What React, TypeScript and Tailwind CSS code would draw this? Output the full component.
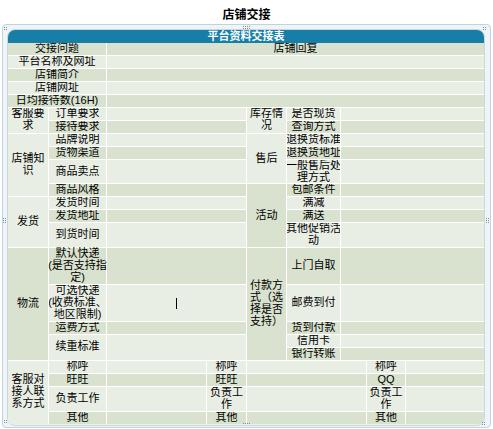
import React from "react";

const FONT = { fontFamily: '"Liberation Sans", "Noto Sans CJK SC", sans-serif' };

function C({
  g,
  children,
  className = "",
}: {
  g?: boolean;
  children?: React.ReactNode;
  className?: string;
}) {
  return (
    <div
      className={`flex items-center justify-center text-center overflow-hidden ${
        g ? "bg-[#d8e2ce]" : "bg-[#e9eee5]"
      } ${className}`}
    >
      {children}
    </div>
  );
}

function Dots({ cols, rows, className }: { cols: number; rows: number; className: string }) {
  const items = [];
  for (let r = 0; r < rows; r++) {
    for (let c = 0; c < cols; c++) {
      items.push(
        <span
          key={`${r}-${c}`}
          className="absolute w-px h-px bg-[#7f8f98]"
          style={{ left: c * 2, top: r * 2 }}
        />
      );
    }
  }
  return <div className={`absolute ${className}`}>{items}</div>;
}

export default function App() {
  return (
    <div className="w-[493px] h-[429px] bg-white text-black text-[11px]" style={FONT}>
      <div className="h-[24px] pt-[9px] text-center text-[12px] leading-[13px] font-bold">店铺交接</div>
      <div className="relative ml-[2px] w-[489px] h-[404px] border border-[#c3d3db] rounded-[4px] bg-[#eef4f7] pt-[4px] pl-[4px] pr-[5px]">
        <Dots cols={2} rows={2} className="left-[1px] top-[2px]" />
        <Dots cols={4} rows={2} className="left-[240px] top-[1px]" />
        <Dots cols={2} rows={2} className="left-[480px] top-[2px]" />
        <Dots cols={2} rows={3} className="left-[0px] top-[193px]" />
        <Dots cols={2} rows={3} className="left-[483px] top-[193px]" />
        <Dots cols={2} rows={2} className="left-[1px] top-[395px]" />
        <Dots cols={4} rows={1} className="left-[240px] top-[398px]" />
        <Dots cols={2} rows={2} className="left-[479px] top-[397px]" />

        <div className="w-[478px] border border-[#cad7dd] rounded-[8px] overflow-hidden bg-[#eef2ec] pb-[1px]">
          <div className="h-[13px] bg-[#177fa7] text-white font-bold text-center leading-[13px]">
            平台资料交接表
          </div>
          <div className="flex flex-col gap-px bg-white leading-[11.95px]">
            <div className="grid grid-cols-[98px_377px] gap-px">
              <C g>交接问题</C>
              <C g>店铺回复</C>
              <C>平台名称及网址</C>
              <C />
              <C g>店铺简介</C>
              <C g />
              <C>店铺网址</C>
              <C />
              <C g>日均接待数(16H)</C>
              <C g />
            </div>

            <div className="grid grid-cols-[40px_57px_139px_39px_53px_143px] gap-px">
              {/* r5 */}
              <C className="row-span-2">客服要求</C>
              <C>订单要求</C>
              <C />
              <C className="row-span-2">库存情况</C>
              <C>是否现货</C>
              <C />
              {/* r6 */}
              <C g>接待要求</C>
              <C g />
              <C g>查询方式</C>
              <C g />
              {/* r7 */}
              <C className="row-span-4">店铺知识</C>
              <C>品牌说明</C>
              <C />
              <C className="row-span-3">售后</C>
              <C className="whitespace-nowrap">退换货标准</C>
              <C />
              {/* r8 */}
              <C g>货物渠道</C>
              <C g />
              <C g className="whitespace-nowrap">退换货地址</C>
              <C g />
              {/* r9 */}
              <C>商品卖点</C>
              <C />
              <C className="whitespace-nowrap">
                一般售后处
                <br />
                理方式
              </C>
              <C />
              {/* r10 */}
              <C g>商品风格</C>
              <C g />
              <C g className="row-span-4">活动</C>
              <C g>包邮条件</C>
              <C g />
              {/* r11 */}
              <C className="row-span-3">发货</C>
              <C>发货时间</C>
              <C />
              <C>满减</C>
              <C />
              {/* r12 */}
              <C g>发货地址</C>
              <C g />
              <C g>满送</C>
              <C g />
              {/* r13 */}
              <C>到货时间</C>
              <C />
              <C className="whitespace-nowrap">
                其他促销活
                <br />
                动
              </C>
              <C />
              {/* r14 */}
              <C g className="row-span-5">物流</C>
              <C g className="whitespace-nowrap overflow-visible">
                默认快递
                <br />
                (是否支持指
                <br />
                定)
              </C>
              <C g />
              <C g className="row-span-5">付款方式（选择是否支持）</C>
              <C g>上门自取</C>
              <C g />
              {/* r15 */}
              <C className="whitespace-nowrap">
                可选快递
                <br />
                (收费标准、
                <br />
                地区限制)
              </C>
              <C>
                <span className="inline-block w-px h-[11px] bg-black" />
              </C>
              <C>邮费到付</C>
              <C />
              {/* r16 */}
              <C g>运费方式</C>
              <C g />
              <C g>货到付款</C>
              <C g />
              {/* r17 */}
              <C className="row-span-2">续重标准</C>
              <C className="row-span-2" />
              <C>信用卡</C>
              <C />
              {/* r18 */}
              <C g>银行转账</C>
              <C g />
            </div>

            <div className="grid grid-cols-[40px_57px_99px_39px_119px_38px_78px] gap-px">
              <C className="row-span-4">客服对接人联系方式</C>
              <C>称呼</C>
              <C />
              <C>称呼</C>
              <C />
              <C>称呼</C>
              <C />

              <C g>旺旺</C>
              <C g />
              <C g>旺旺</C>
              <C g />
              <C g>QQ</C>
              <C g />

              <C>负责工作</C>
              <C />
              <C>负责工作</C>
              <C />
              <C>负责工作</C>
              <C />

              <C g>其他</C>
              <C g />
              <C g>其他</C>
              <C g />
              <C g>其他</C>
              <C g />
            </div>
          </div>
        </div>
      </div>
    </div>
  );
}
